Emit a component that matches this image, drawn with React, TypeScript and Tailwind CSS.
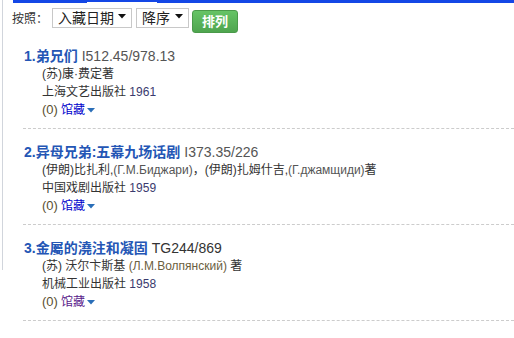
import React from "react";

type Book = {
  no: string;
  title: string;
  call: string;
  callColor: string;
  author: React.ReactNode;
  publisher: string;
  year: string;
  visited?: boolean;
};

const ru = "text-[#555]";

const books: Book[] = [
  {
    no: "1.",
    title: "弟兄们",
    call: "I512.45/978.13",
    callColor: "text-[#555]",
    author: <>(苏)康·费定著</>,
    publisher: "上海文艺出版社",
    year: "1961",
  },
  {
    no: "2.",
    title: "异母兄弟:五幕九场话剧",
    call: "I373.35/226",
    callColor: "text-[#555]",
    author: (
      <>
        (伊朗)比扎利,<span className={ru}>(Г.М.Биджари)</span>，(伊朗)扎姆什吉,
        <span className={ru}>(Г.джамщиди)</span>著
      </>
    ),
    publisher: "中国戏剧出版社",
    year: "1959",
  },
  {
    no: "3.",
    title: "金屬的澆注和凝固",
    call: "TG244/869",
    callColor: "text-[#333]",
    author: (
      <>
        (苏) 沃尔卞斯基 <span className="text-[#6b6040]">(Л.М.Волпянский)</span> 著
      </>
    ),
    publisher: "机械工业出版社",
    year: "1958",
    visited: true,
  },
];

function Caret({ className }: { className?: string }) {
  return (
    <svg width="8" height="5" viewBox="0 0 8 5" className={className}>
      <path d="M0 0 H8 L4 4.5 Z" fill="currentColor" />
    </svg>
  );
}

function Select({ label, width }: { label: string; width: string }) {
  return (
    <div
      className={`${width} h-[20px] border border-[#c8c8c8] bg-white flex items-center justify-between pl-[5px] pr-[5px] text-[14px] leading-[18px] text-[#222]`}
    >
      <span>{label}</span>
      <Caret className="text-[#111] mb-[3px]" />
    </div>
  );
}

export default function App() {
  return (
    <div className="relative w-[514px] h-[338px] bg-white overflow-hidden font-['Liberation_Sans','Noto_Sans_CJK_SC',sans-serif]">
      <div className="absolute left-[2px] top-0 w-0 h-[270px] border-l border-l-gray-300" />
      <div className="ml-[13px] h-[3px] bg-blue-700 flex flex-col justify-end">
        <div className="ml-[74px] w-[70px] h-px bg-white" />
      </div>
      <div className="flex items-start pl-[12px] pt-[5px] h-[30px]">
        <span className="text-[12px] leading-[18px] mt-[2px] text-[#333] mr-[4px]">按照：</span>
        <Select label="入藏日期" width="w-[80px]" />
        <div className="w-[4px]" />
        <Select label="降序" width="w-[53px]" />
        <button className="ml-[3px] mt-[2px] w-[46px] h-[23px] rounded-[3px] border border-[#4a9a4a] bg-gradient-to-b from-[#66c466] to-[#4fa54f] text-white text-[13px] font-bold leading-none flex items-center justify-center">
          排列
        </button>
      </div>

      <div className="ml-[23px]">
        {books.map((b) => (
          <div key={b.no} className="pt-[14px] pb-[9px] border-b border-dashed border-[#cccccc]">
            <div className="pl-[1px] h-[18px] leading-[18px] flex items-center whitespace-nowrap">
              <span className="text-[14px] font-bold text-[#2456b5]">
                {b.no}
                {b.title}
              </span>
              <span className={`ml-[4px] text-[14px] ${b.callColor}`}>{b.call}</span>
            </div>
            <div className="pl-[19px] text-[12px] leading-[18px] text-[#333] whitespace-nowrap">
              <div className="h-[18px]">{b.author}</div>
              <div className="h-[18px]">
                {b.publisher} <span className="text-[#3a3a6e]">{b.year}</span>
              </div>
              <div className="h-[18px] flex items-center">
                <span className="text-[#5a5030] text-[13px]">(0)</span>
                <span className={`ml-[3px] ${b.visited ? "text-[#5a1a8b]" : "text-[#0000cc]"}`}>馆藏</span>
                <Caret className="ml-[2px] text-[#2a6eb8]" />
              </div>
            </div>
          </div>
        ))}
      </div>
    </div>
  );
}
